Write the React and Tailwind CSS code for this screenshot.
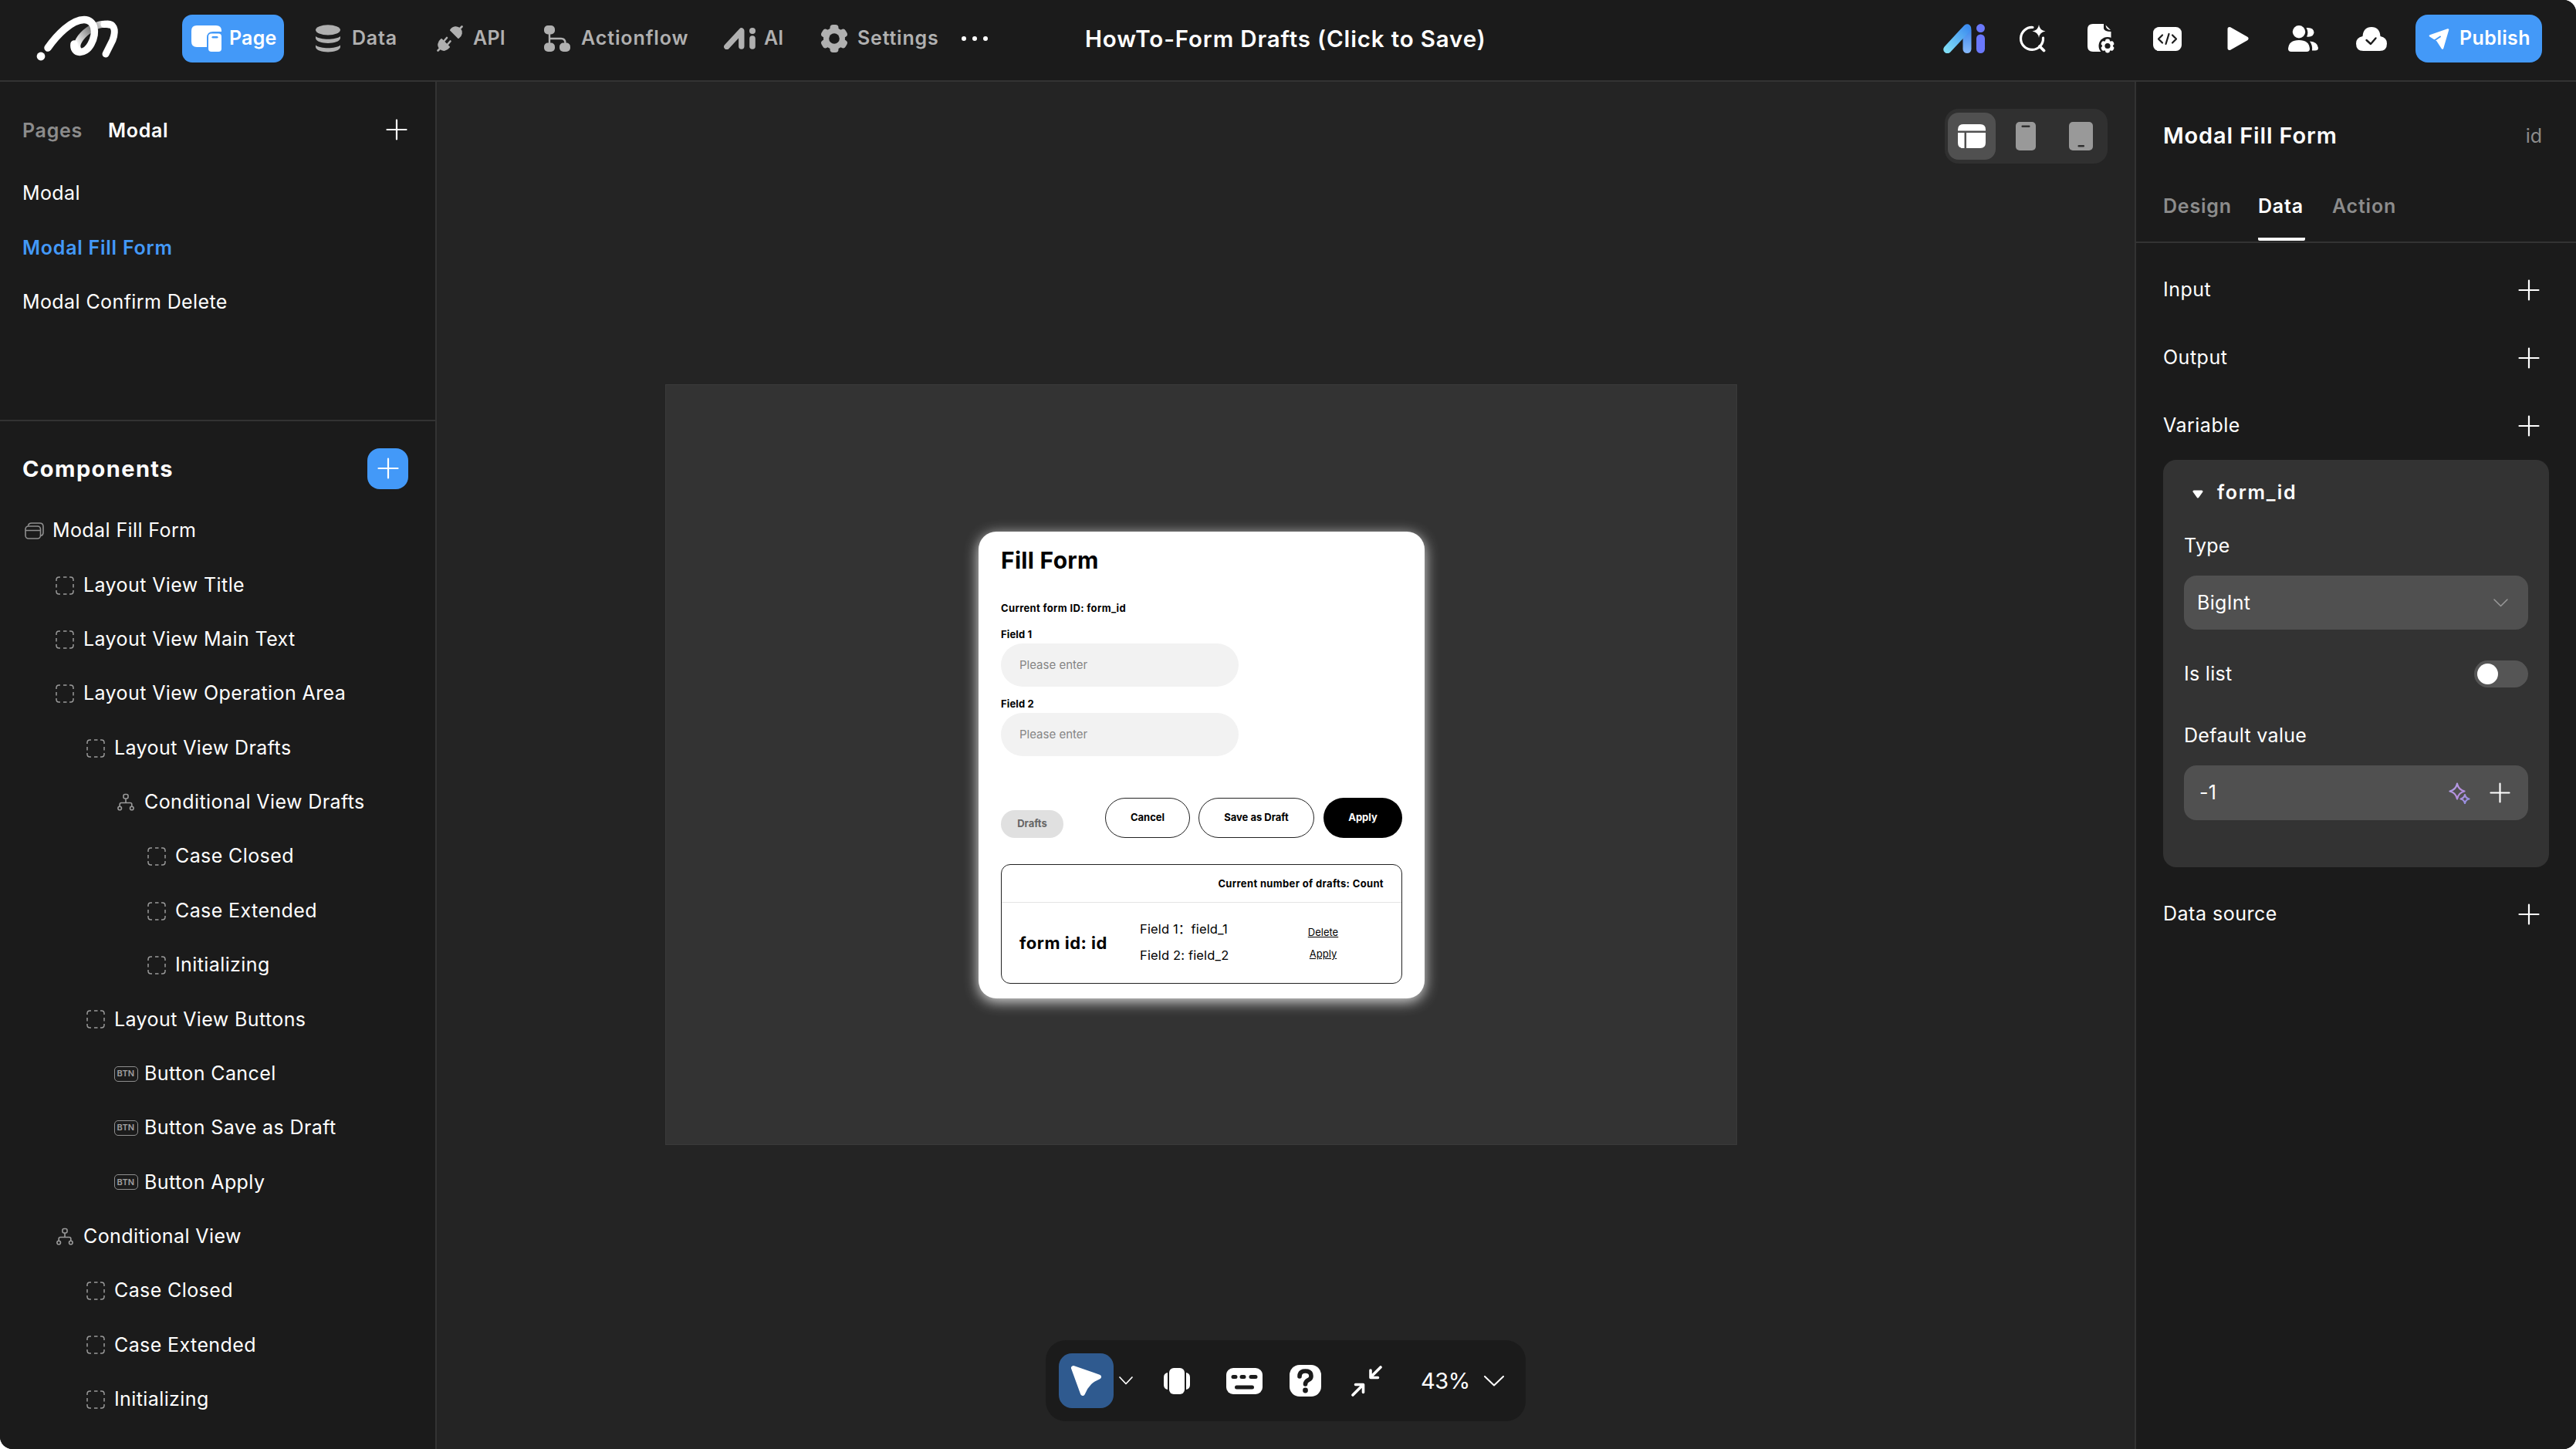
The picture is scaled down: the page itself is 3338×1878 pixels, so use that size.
/**
 * Page builder editor: top bar, component tree, canvas and data panel
 */

function Plus({ size = 28, stroke = 2.2 }) {
  return (
    <svg width={size} height={size} viewBox="0 0 28 28" fill="none" stroke="currentColor" strokeWidth={stroke} strokeLinecap="round" className="shrink-0">
      <path d="M14 1.5v25M1.5 14h25" />
    </svg>
  );
}

function Chevron({ width, height, className, stroke = 2 }) {
  return (
    <svg width={width} height={height} viewBox={`0 0 ${width} ${height}`} fill="none" stroke="currentColor" strokeWidth={stroke} strokeLinecap="round" strokeLinejoin="round" className={className}>
      <path d={`M1 1L${width / 2} ${height - 1.5}L${width - 1} 1`} />
    </svg>
  );
}

function Logo() {
  return (
    <svg width="108" height="60" viewBox="0 0 108 60" fill="none" strokeLinecap="round" strokeLinejoin="round" className="shrink-0">
      <defs>
        <linearGradient id="loop" x1="90" y1="10" x2="52" y2="38" gradientUnits="userSpaceOnUse">
          <stop offset="0" stopColor="#fff" />
          <stop offset="0.4" stopColor="#777" />
          <stop offset="1" stopColor="#fff" />
        </linearGradient>
      </defs>
      <path d="M54 44C50 38 57 27 68 19C77 12 87 10 94 12" stroke="url(#loop)" strokeWidth="9" />
      <path d="M15 42C27 25 46 5.500 62 5.500C76 5.500 79 22 71 37C63 52 47 50 49 37" stroke="#fff" strokeWidth="9.5" />
      <path d="M88 11.500C101 9 104 18 99 32L90 50" stroke="#fff" strokeWidth="9" />
      <circle cx="6" cy="53" r="5.4" fill="#fff" />
    </svg>
  );
}

function PageIcon() {
  return (
    <svg width="39" height="34" viewBox="0 0 39 34" className="shrink-0">
      <path d="M7 0H32Q39 0 39 7V8H28Q20 8 20 16V28H7Q0 28 0 21V7Q0 0 7 0Z" fill="#fff" />
      <rect x="22" y="10.5" width="17" height="23.5" rx="4" fill="#fff" />
      <rect x="26.5" y="14" width="8" height="2.6" rx="1.3" fill="#4399f8" />
    </svg>
  );
}

function DatabaseIcon() {
  return (
    <svg width="32" height="36" viewBox="0 0 32 36" fill="currentColor" className="shrink-0">
      <ellipse cx="16" cy="6.8" rx="16" ry="6.6" />
      <path d="M0 15C6 20 26 20 32 15V17.500C31 26 1 26 0 17.500Z" />
      <path d="M0 26.500C6 31.500 26 31.500 32 26.500V29C31 37.500 1 37.500 0 29Z" />
    </svg>
  );
}

function PlugIcon() {
  return (
    <svg width="34" height="34" viewBox="0 0 34 34" fill="currentColor" stroke="currentColor" strokeLinecap="round" strokeLinejoin="round" className="shrink-0">
      <path d="M32.500 1.500L28.500 5.500" strokeWidth="2.600" />
      <path d="M18 6L28 16C32.500 12.500 33 8 30 4.500C26.500 1 21 1.500 18 6Z" strokeWidth="2" />
      <path d="M1.500 32.500L5.500 28.500" strokeWidth="2.600" />
      <path d="M6 18L16 28C12.500 32.500 8 33 4.500 30C1 26.500 1.500 21.500 6 18Z" strokeWidth="2" />
      <path d="M9.500 20L13 16M14 24.500L17.500 20.500" strokeWidth="2.600" />
    </svg>
  );
}

function FlowIcon() {
  return (
    <svg width="34" height="34" viewBox="0 0 34 34" fill="currentColor" className="shrink-0">
      <rect width="14" height="11.500" rx="5" />
      <rect y="22.500" width="14" height="11.500" rx="5" />
      <rect x="20" y="22.500" width="14" height="11.500" rx="5" />
      <path d="M7 10V24M7 17H22Q27.500 17 27.500 23" fill="none" stroke="currentColor" strokeWidth="2.400" />
    </svg>
  );
}

function AiIcon() {
  return (
    <svg width="41" height="28" viewBox="0 0 41 28" fill="none" stroke="currentColor" strokeLinecap="round" strokeLinejoin="round" className="shrink-0">
      <path d="M3.800 24.500L22.800 4V24" strokeWidth="7.400" />
      <path d="M37 14V24" strokeWidth="7.600" />
      <circle cx="37" cy="4" r="4" fill="currentColor" stroke="none" />
    </svg>
  );
}

function AiColorIcon() {
  return (
    <svg width="54" height="38" viewBox="0 0 54 38" fill="none" strokeLinecap="round" className="shrink-0">
      <defs>
        <linearGradient id="slash" x1="4" y1="34" x2="32" y2="4" gradientUnits="userSpaceOnUse">
          <stop offset="0" stopColor="#7fdcf5" />
          <stop offset="1" stopColor="#3d8df0" />
        </linearGradient>
        <linearGradient id="stem" x1="0" y1="6" x2="0" y2="38" gradientUnits="userSpaceOnUse">
          <stop offset="0" stopColor="#3d86ea" />
          <stop offset="1" stopColor="#86b9fb" />
        </linearGradient>
      </defs>
      <path d="M31 8V32.500" stroke="url(#stem)" strokeWidth="11" />
      <path d="M5.500 33L31 5.500" stroke="url(#slash)" strokeWidth="10.500" />
      <path d="M48.500 19V32.500" stroke="#6a78fb" strokeWidth="11" />
      <circle cx="48.500" cy="5.600" r="5.500" fill="#6a78fb" />
    </svg>
  );
}

function GearIcon() {
  return (
    <svg width="36" height="36" viewBox="0 0 36 36" className="shrink-0">
      <g fill="currentColor">
        <rect x="12.500" y="0" width="11" height="36" rx="4" />
        <rect x="12.500" y="0" width="11" height="36" rx="4" transform="rotate(60 18 18)" />
        <rect x="12.500" y="0" width="11" height="36" rx="4" transform="rotate(120 18 18)" />
        <circle cx="18" cy="18" r="14" />
      </g>
      <circle cx="18" cy="18" r="6.800" fill="#1b1b1b" />
    </svg>
  );
}

function SearchSparkIcon() {
  return (
    <svg width="36" height="36" viewBox="0 0 36 36" fill="none" stroke="#fff" strokeWidth="3.200" strokeLinecap="round" className="shrink-0">
      <path d="M18 3.500A14.500 14.500 0 1 0 31.500 17" />
      <path d="M27 28L32.500 33.500" strokeWidth="3.800" />
      <path d="M26 0Q27 7.500 34.500 8.500Q27 9.500 26 17Q25 9.500 17.500 8.500Q25 7.500 26 0Z" fill="#fff" stroke="none" />
    </svg>
  );
}

function FileGearIcon() {
  return (
    <svg width="36" height="38" viewBox="0 0 36 38" className="shrink-0">
      <path d="M7 0H21V6Q22 10 30.500 10V36H7Q0 36 0 29V7Q0 0 7 0Z" fill="#fff" />
      <path d="M23.500 1.500L30 8Q24 8 23.500 1.500Z" fill="#fff" />
      <circle cx="26" cy="28.500" r="11.500" fill="#1b1b1b" />
      <g fill="#fff">
        <rect x="23" y="19.500" width="6" height="18" rx="2.400" />
        <rect x="23" y="19.500" width="6" height="18" rx="2.400" transform="rotate(60 26 28.500)" />
        <rect x="23" y="19.500" width="6" height="18" rx="2.400" transform="rotate(120 26 28.500)" />
        <circle cx="26" cy="28.500" r="7" />
      </g>
      <circle cx="26" cy="28.500" r="3.600" fill="#1b1b1b" />
    </svg>
  );
}

function CodeIcon() {
  return (
    <svg width="37" height="31" viewBox="0 0 37 31" fill="none" stroke="#1b1b1b" strokeWidth="2.200" strokeLinecap="round" strokeLinejoin="round" className="shrink-0">
      <rect width="37" height="31" rx="7.500" fill="#fff" stroke="none" />
      <path d="M12 10.500L7 15.500L12 20.500M25 10.500L30 15.500L25 20.500M20.500 9L16.500 22" />
    </svg>
  );
}

function PlayIcon() {
  return (
    <svg width="30" height="32" viewBox="0 0 30 32" className="shrink-0">
      <path d="M4 3.500L26 16L4 28.500Z" fill="#fff" stroke="#fff" strokeWidth="5" strokeLinejoin="round" />
    </svg>
  );
}

function UsersIcon() {
  return (
    <svg width="40" height="34" viewBox="0 0 40 34" fill="#fff" className="shrink-0">
      <circle cx="14" cy="8.300" r="8.200" />
      <path d="M0 30Q1 19 14 19Q27 19 28 30Q28 34 24 34H4Q0 34 0 30Z" />
      <path d="M23.500 3Q33 2 33.500 9Q33 15.500 24 14.500Q27 9 23.500 3Z" />
      <path d="M28 20.500Q38 21 39 29Q39 32.500 35 32.500H31Q32 26 28 20.500Z" />
    </svg>
  );
}

function CloudIcon() {
  return (
    <svg width="40" height="31" viewBox="0 0 40 31" className="shrink-0">
      <path d="M9.500 31Q0 31 0 21.500Q0 13.500 8.500 12Q9.500 0 20 0Q30.500 0 31.500 12Q40 13.500 40 21.500Q40 31 30.500 31Z" fill="#fff" />
      <path d="M13.500 17L19 22L25.500 14.500" fill="none" stroke="#1b1b1b" strokeWidth="2.400" strokeLinecap="round" strokeLinejoin="round" />
    </svg>
  );
}

function SendIcon() {
  return (
    <svg width="27" height="27" viewBox="0 0 27 27" className="shrink-0">
      <path d="M2 9.500L25 1.500L18 25.500L11.500 15.500Z" fill="#fff" stroke="#fff" strokeWidth="2.600" strokeLinejoin="round" />
      <path d="M4.500 17.500L15 10.500" stroke="#4399f8" strokeWidth="2" strokeLinecap="round" />
    </svg>
  );
}

function LayersIcon() {
  return (
    <svg width="25" height="22" viewBox="0 0 25 22" fill="none" stroke="#8f8f8f" strokeWidth="1.600">
      <rect x="1" y="5" width="19.500" height="16" rx="4" />
      <path d="M1 10.500H20.500M4.500 4.500Q5 1 9 1H19.500Q24 1 24 5.500V13Q24 17 20.500 17.500" />
    </svg>
  );
}

function DashedIcon() {
  return (
    <svg width="24" height="24" viewBox="0 0 24 24" fill="none" stroke="#9a9a9a" strokeWidth="1.500">
      <path d="M1 6V4.500Q1 1 4.500 1H6M18 1H19.500Q23 1 23 4.500V6M23 18V19.500Q23 23 19.500 23H18M6 23H4.500Q1 23 1 19.500V18M10 1H14.500M10 23H14.500M1 10V14.500M23 10V14.500" />
    </svg>
  );
}

function BranchIcon() {
  return (
    <svg width="22" height="23" viewBox="0 0 22 23" fill="none" stroke="#9a9a9a" strokeWidth="1.600">
      <rect x="8" y="1.500" width="6" height="5.500" rx="2" />
      <circle cx="3.200" cy="19.500" r="2.300" />
      <circle cx="18.800" cy="19.500" r="2.300" />
      <path d="M11 7V12.500M3.200 17V14.500Q3.200 12.500 5.200 12.500H16.800Q18.800 12.500 18.800 14.500V17" />
    </svg>
  );
}

function BtnIcon() {
  return (
    <span className="flex h-5 w-[31px] items-center justify-center rounded-[5px] border-[1.5px] border-[#8f8f8f] text-[11px] leading-none font-semibold tracking-[0.2px] text-[#a0a0a0]">
      BTN
    </span>
  );
}

function SparkleIcon() {
  return (
    <svg width="28" height="28" viewBox="0 0 28 28" fill="none" stroke="url(#magic)" strokeWidth="2.200" strokeLinejoin="round">
      <defs>
        <linearGradient id="magic" x1="0" y1="4" x2="28" y2="24" gradientUnits="userSpaceOnUse">
          <stop offset="0" stopColor="#a9a4e8" />
          <stop offset="0.450" stopColor="#bb8fdf" />
          <stop offset="1" stopColor="#8f8fe0" />
        </linearGradient>
      </defs>
      <path d="M11 1.500Q12.500 9.500 20.500 11.500Q12.500 13.500 11 21.500Q9.500 13.500 1.500 11.500Q9.500 9.500 11 1.500Z" />
      <path d="M21 16Q22 20.500 26.500 21.500Q22 22.500 21 27Q20 22.500 15.500 21.500Q20 20.500 21 16Z" />
    </svg>
  );
}

const nav = [
  { label: 'Data', icon: <DatabaseIcon />, box: 'ml-[41px] gap-[15px]', text: 'w-[62px] tracking-[0.8px]' },
  { label: 'API', icon: <PlugIcon />, box: 'ml-12 gap-[13px]', text: 'w-[44px] tracking-[0.2px]' },
  { label: 'Actionflow', icon: <FlowIcon />, box: 'ml-12 gap-[14px]', text: 'w-[141px] tracking-[0.9px]' },
  { label: 'AI', icon: <AiIcon />, box: 'ml-[44px] gap-[11px]', text: 'w-[26px]' },
  { label: 'Settings', icon: <GearIcon />, box: 'ml-[47px] gap-[12px]', text: 'w-[110px] tracking-[0.8px]' },
];

function TopBar() {
  return (
    <header className="flex h-[106px] shrink-0 items-center border-b-2 border-[#333] bg-[#1b1b1b] pt-0 pr-[44px] pb-1 pl-[47px]">
      <Logo />
      <div className="ml-[81px] flex h-[62px] w-[132px] items-center gap-[10px] rounded-[13px] bg-[#4399f8] pl-3 text-[25px] font-semibold">
        <PageIcon />
        <span className="tracking-[0.2px]">Page</span>
      </div>
      {nav.map((item) => (
        <div key={item.label} className={`flex items-center text-[25px] font-semibold text-[#b0b0b0] ${item.box}`}>
          {item.icon}
          <span className={`whitespace-nowrap ${item.text}`}>{item.label}</span>
        </div>
      ))}
      <div className="ml-[25px] flex gap-2">
        <i className="size-1.5 rounded-full bg-white" />
        <i className="size-1.5 rounded-full bg-white" />
        <i className="size-1.5 rounded-full bg-white" />
      </div>
      <h1 className="ml-[126px] text-[29.5px] font-semibold tracking-[0.85px] whitespace-nowrap">HowTo-Form Drafts (Click to Save)</h1>
      <div className="ml-auto flex items-center">
        <AiColorIcon />
        <span className="ml-11"><SearchSparkIcon /></span>
        <span className="ml-[53px]"><FileGearIcon /></span>
        <span className="ml-[49px]"><CodeIcon /></span>
        <span className="ml-[58px]"><PlayIcon /></span>
        <span className="ml-[50px]"><UsersIcon /></span>
        <span className="ml-12"><CloudIcon /></span>
        <div className="ml-[37px] flex h-[62px] w-[164px] items-center gap-[13px] rounded-[16px] bg-[#4399f8] pl-[17px] text-[25px] font-semibold">
          <SendIcon />
          <span className="tracking-[0.4px]">Publish</span>
        </div>
      </div>
    </header>
  );
}

const tree = [
  { label: 'Modal Fill Form', type: 'modal', level: 0 },
  { label: 'Layout View Title', type: 'view', level: 1 },
  { label: 'Layout View Main Text', type: 'view', level: 1 },
  { label: 'Layout View Operation Area', type: 'view', level: 1 },
  { label: 'Layout View Drafts', type: 'view', level: 2 },
  { label: 'Conditional View Drafts', type: 'branch', level: 3 },
  { label: 'Case Closed', type: 'view', level: 4 },
  { label: 'Case Extended', type: 'view', level: 4 },
  { label: 'Initializing', type: 'view', level: 4 },
  { label: 'Layout View Buttons', type: 'view', level: 2 },
  { label: 'Button Cancel', type: 'button', level: 3 },
  { label: 'Button Save as Draft', type: 'button', level: 3 },
  { label: 'Button Apply', type: 'button', level: 3 },
  { label: 'Conditional View', type: 'branch', level: 1 },
  { label: 'Case Closed', type: 'view', level: 2 },
  { label: 'Case Extended', type: 'view', level: 2 },
  { label: 'Initializing', type: 'view', level: 2 },
];

const treeIcons = {
  modal: <LayersIcon />,
  view: <DashedIcon />,
  branch: <BranchIcon />,
  button: <BtnIcon />,
};

const indents = ['pl-[24px]', 'pl-[64px]', 'pl-[104px]', 'pl-[143px]', 'pl-[183px]'];

function Sidebar() {
  return (
    <aside className="flex w-[566px] shrink-0 flex-col overflow-hidden border-r-2 border-[#333] bg-[#1b1b1b]">
      <div className="h-[440px] border-b-2 border-[#333] pt-[27px] pl-[29px]">
        <div className="flex h-[70px] items-center pr-9 text-[25px] font-semibold tracking-[0.7px]">
          <span className="w-[111px] pt-[3px] text-[#8c8c8c]">Pages</span>
          <span className="pt-[3px]">Modal</span>
          <span className="ml-auto"><Plus /></span>
        </div>
        <div className="mt-3 text-[25px] leading-[70.5px] tracking-[0.4px]">
          <p>Modal</p>
          <p className="font-semibold tracking-[0.75px] text-[#4399f8]">Modal Fill Form</p>
          <p>Modal Confirm Delete</p>
        </div>
      </div>
      <div className="flex h-[106px] shrink-0 items-center justify-between pt-[18px] pr-[35px] pl-[29px]">
        <h2 className="text-[29px] font-bold tracking-[1.4px]">Components</h2>
        <div className="mb-[2px] flex size-[53px] items-center justify-center rounded-2xl bg-[#4399f8]">
          <Plus />
        </div>
      </div>
      <ul className="pt-px">
        {tree.map((node, i) => (
          <li key={i} className={`flex h-[70.35px] items-center ${indents[node.level]}`}>
            <span className="flex w-10 justify-center">{treeIcons[node.type]}</span>
            <span className="ml-1 text-[25px] tracking-[0.4px] whitespace-nowrap">{node.label}</span>
          </li>
        ))}
      </ul>
    </aside>
  );
}

function FormField({ label }) {
  return (
    <div>
      <p className="h-5 text-[13px] leading-5 font-bold tracking-[0.15px]">{label}</p>
      <div className="mt-0.5 flex h-14 w-[308px] items-center rounded-full bg-[#f2f2f2] pl-6 text-[15px] text-[#858585]">
        Please enter
      </div>
    </div>
  );
}

function ModalPreview() {
  return (
    <div className="h-[605px] w-[578px] rounded-[23px] bg-white px-[29px] pt-[17px] text-black shadow-[0_4px_18px_rgba(255,255,255,0.85)]">
      <h3 className="h-10 text-[30px] leading-10 font-bold tracking-[0.3px]">Fill Form</h3>
      <p className="mt-8 h-5 text-[13px] leading-5 font-bold tracking-[0.35px]">Current form ID: form_id</p>
      <div className="mt-3.5 flex flex-col gap-3">
        <FormField label="Field 1" />
        <FormField label="Field 2" />
      </div>
      <div className="mt-[54px] flex items-end text-[13px] font-bold">
        <span className="flex h-9 w-[81px] items-center justify-center rounded-full bg-[#e0e0e0] text-[#666]">Drafts</span>
        <span className="ml-[54px] flex h-[52px] w-[110px] items-center justify-center rounded-full border border-[#222]">Cancel</span>
        <span className="ml-[11px] flex h-[52px] w-[150px] items-center justify-center rounded-full border border-[#222]">Save as Draft</span>
        <span className="ml-3 flex h-[52px] w-[102px] items-center justify-center rounded-full bg-black text-white">Apply</span>
      </div>
      <div className="mt-[34px] h-[155px] rounded-xl border border-[#222]">
        <div className="flex h-[49px] items-center justify-end border-b border-[#e4e4e4] pt-px pr-[23px] text-[13px] font-bold tracking-[0.35px]">
          Current number of drafts: Count
        </div>
        <div className="flex h-[104px] items-center pl-[23px]">
          <span className="w-[156px] text-[22px] font-bold tracking-[0.5px] whitespace-nowrap">form id: id</span>
          <div className="w-[200px] pb-0.5 text-[16.5px] leading-[34px] tracking-[0.15px]">
            <p>Field 1：field_1</p>
            <p>Field 2: field_2</p>
          </div>
          <div className="flex w-[75px] flex-col items-center text-[13px] leading-7 underline">
            <span>Delete</span>
            <span>Apply</span>
          </div>
        </div>
      </div>
    </div>
  );
}

function DeviceSwitch() {
  return (
    <div className="flex h-[71px] w-[211px] items-center rounded-[18px] bg-[#303030] pl-1">
      <span className="flex h-[61px] w-[62px] items-center justify-center rounded-[14px] bg-[#505050]">
        <svg width="36" height="31" viewBox="0 0 36 31" fill="#fff">
          <path d="M7 0H29Q36 0 36 7V8.500H0V7Q0 0 7 0Z" />
          <path d="M0 11H8.500V31H7Q0 31 0 24Z" />
          <path d="M11 11H36V24Q36 31 29 31H11Z" />
        </svg>
      </span>
      <svg width="26" height="37" viewBox="0 0 26 37" className="ml-[26px]">
        <rect width="26" height="37" rx="5" fill="#999" />
        <rect x="7.500" y="4.500" width="11" height="2.600" rx="1" fill="#303030" />
      </svg>
      <svg width="31" height="37" viewBox="0 0 31 37" className="ml-[43px]">
        <rect width="31" height="37" rx="5" fill="#999" />
        <rect x="11.500" y="30" width="8.500" height="2.600" rx="1" fill="#303030" />
      </svg>
    </div>
  );
}

function Toolbar() {
  return (
    <div className="flex h-[105px] w-[622px] items-center rounded-[26px] bg-[#1b1b1b] pl-[17px]">
      <span className="flex size-[71px] items-center justify-center rounded-[17px] bg-[#2f5a8f]">
        <svg width="41" height="41" viewBox="0 0 41 41">
          <path d="M4 4L37 15.500Q29 19 25 23Q19 29 16 37Z" fill="#fff" stroke="#fff" strokeWidth="6" strokeLinejoin="round" />
        </svg>
      </span>
      <Chevron width={18} height={11} stroke={1.7} className="ml-[7px]" />
      <svg width="34" height="34" viewBox="0 0 34 34" fill="#fff" className="ml-10">
        <rect x="7" width="20" height="34" rx="6" />
        <path d="M5 6V28Q0 27 0 22V12Q0 7 5 6ZM29 6V28Q34 27 34 22V12Q34 7 29 6Z" />
      </svg>
      <svg width="47" height="34" viewBox="0 0 47 34" className="ml-[47px]">
        <rect width="47" height="34" rx="9" fill="#fff" />
        <path d="M9 11.500H12M20 11.500H23M32 11.500H38M13.500 25H33.500" stroke="#1b1b1b" strokeWidth="5" strokeLinecap="round" />
      </svg>
      <svg width="41" height="41" viewBox="0 0 41 41" className="ml-[35px]">
        <rect width="41" height="41" rx="13" fill="#fff" />
        <path d="M13 15Q13 8 20.500 8Q28 8 28 14.500Q28 18 24.500 19.500Q20.500 21.500 20.500 25" fill="none" stroke="#1b1b1b" strokeWidth="5.600" strokeLinecap="round" />
        <circle cx="20.500" cy="33" r="3.400" fill="#1b1b1b" />
      </svg>
      <svg width="40" height="40" viewBox="0 0 40 40" fill="none" stroke="#fff" strokeWidth="3.600" strokeLinecap="round" strokeLinejoin="round" className="ml-[39px]">
        <path d="M38 2L25.500 14.500M25 6V15.500H34.500M2 38L15 25M5.500 24.500H15.500V34.500" />
      </svg>
      <span className="ml-[50px] w-[62px] text-[29px] tracking-[-0.5px] whitespace-nowrap">43%</span>
      <Chevron width={26} height={14} stroke={2} className="ml-[20px]" />
    </div>
  );
}

function Canvas() {
  return (
    <main className="flex w-[2200px] shrink-0 flex-col bg-[#242424]">
      <div className="mt-[35px] flex justify-end pr-[35px]">
        <DeviceSwitch />
      </div>
      <div className="mt-[286px] ml-[296px] h-[986px] w-[1389px] border border-[#3a3a3a] bg-[#333] pt-[190px] pl-[405px]">
        <ModalPreview />
      </div>
      <div className="mt-[253px] ml-[789px]">
        <Toolbar />
      </div>
    </main>
  );
}

function SectionRow({ label }) {
  return (
    <div className="flex h-[88px] items-center justify-between pr-[12px] text-[25px] tracking-[0.5px]">
      <span className="pt-0.5">{label}</span>
      <span className="mt-0.5 flex"><Plus /></span>
    </div>
  );
}

function DataPanel() {
  return (
    <aside className="flex-1 border-l-2 border-[#333] bg-[#1b1b1b]">
      <div className="h-[209px] border-b-2 border-[#333] pt-[50px] pr-[44px] pl-[35px]">
        <div className="flex h-10 items-center justify-between">
          <h2 className="text-[29px] font-semibold tracking-[0.85px]">Modal Fill Form</h2>
          <span className="pt-0.5 text-[25px] text-[#8c8c8c]">id</span>
        </div>
        <div className="mt-[51px] flex h-[65px] text-[25px] leading-[40px] font-semibold tracking-[0.8px] text-[#8c8c8c]">
          <span className="w-[123px]">Design</span>
          <span className="w-[61px] rounded-xs border-b-4 border-white text-white">Data</span>
          <span className="ml-[35px]">Action</span>
        </div>
      </div>
      <div className="pt-[16px] pr-[35px] pl-[35px]">
        <SectionRow label="Input" />
        <SectionRow label="Output" />
        <SectionRow label="Variable" />
        <div className="mt-px h-[528px] rounded-[17px] bg-[#333] px-[27px] pt-[23px] text-[25px] tracking-[0.3px]">
          <div className="flex h-10 items-center pl-[11px]">
            <svg width="14" height="11" viewBox="0 0 14 11" className="mt-[3px]">
              <path d="M2 2H12L7 9Z" fill="#fff" stroke="#fff" strokeWidth="3" strokeLinejoin="round" />
            </svg>
            <span className="ml-[18px] font-semibold tracking-[1.7px]">form_id</span>
          </div>
          <p className="mt-[28px] leading-10">Type</p>
          <div className="mt-[19px] flex h-[70px] items-center justify-between rounded-2xl bg-[#505050] pr-[26px] pl-[17px]">
            <span className="pt-px">BigInt</span>
            <Chevron width={19} height={11} stroke={1.5} className="text-[#999]" />
          </div>
          <div className="mt-[37px] flex h-10 items-center justify-between">
            <span className="pt-px">Is list</span>
            <span className="flex h-[35px] w-[70px] items-center rounded-full bg-[#555] pl-1">
              <i className="size-[27px] rounded-full bg-white" />
            </span>
          </div>
          <p className="mt-10 leading-10">Default value</p>
          <div className="mt-[19px] flex h-[71px] items-center rounded-2xl bg-[#505050] pr-[23px] pl-[20px]">
            <span>-1</span>
            <span className="ml-auto"><SparkleIcon /></span>
            <span className="ml-[25px]"><Plus size={27} /></span>
          </div>
        </div>
        <div className="mt-[16px]">
          <SectionRow label="Data source" />
        </div>
      </div>
    </aside>
  );
}

export default function App() {
  return (
    <div className="bg-white">
      <div className="flex h-[1878px] w-[3338px] flex-col overflow-hidden rounded-tr-2xl rounded-b-2xl bg-[#1b1b1b] font-['Inter','Noto_Sans_CJK_SC',sans-serif] text-white">
        <TopBar />
        <div className="flex h-[1772px]">
          <Sidebar />
          <Canvas />
          <DataPanel />
        </div>
      </div>
    </div>
  );
}
